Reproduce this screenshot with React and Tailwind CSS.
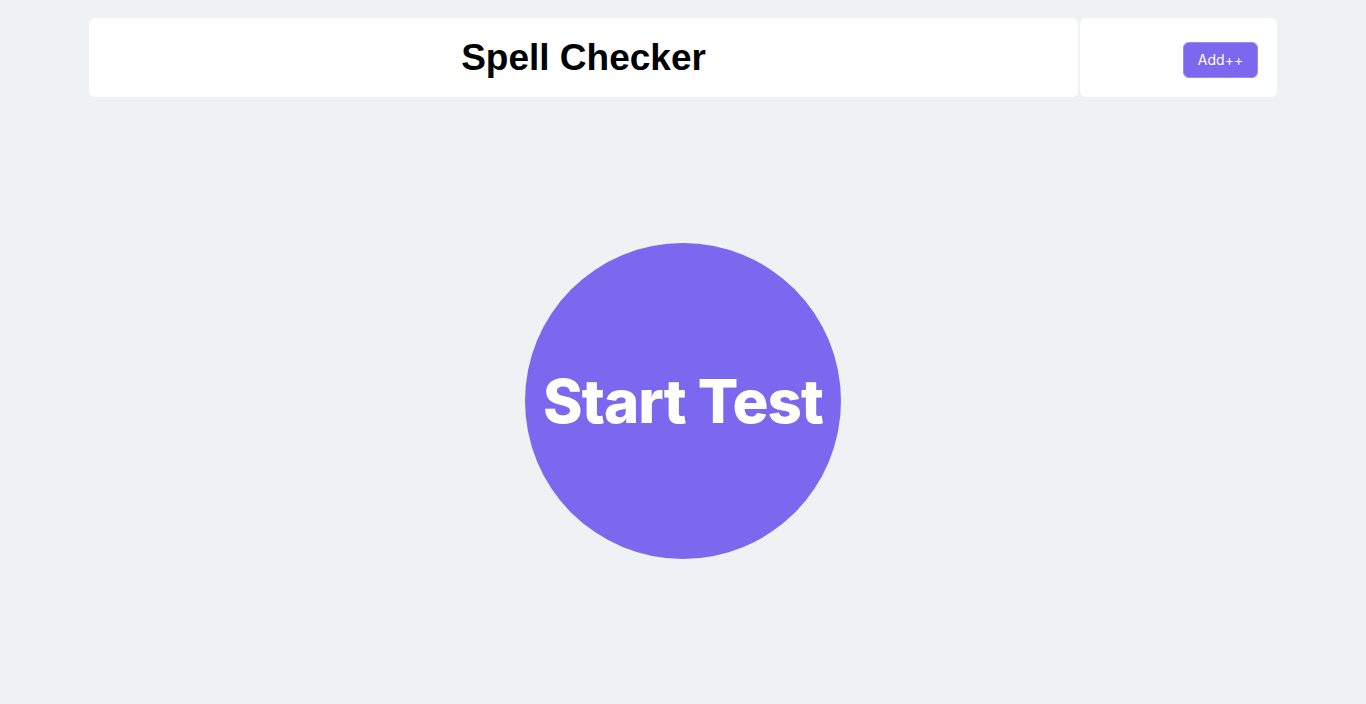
export default function App() {
  return (
    <div className="min-h-screen bg-[#eff2f4] flex flex-col pt-[18px]" style={{ fontFamily: "Inter, sans-serif" }}>
      <header className="w-[1188px] mx-auto flex gap-[2px]">
        <div className="flex-1 h-[79px] bg-white rounded-md flex items-center justify-center">
          <h1 className="text-[37px] font-bold text-black" style={{ fontFamily: '"Liberation Sans", Arial, sans-serif' }}>
            Spell Checker
          </h1>
        </div>
        <div className="w-[197px] h-[79px] bg-white rounded-md flex items-center justify-end pr-[19px] pt-[5px]">
          <button className="h-[36px] w-[75px] rounded-md bg-[#7b68ee] border border-[#9a8cf2] text-white text-sm">
            Add++
          </button>
        </div>
      </header>

      <main className="flex-1 flex items-center justify-center">
        <button className="w-[316px] h-[316px] rounded-full bg-[#7b68ee] text-white text-[60px] font-extrabold tracking-[-1px]">
          Start Test
        </button>
      </main>
    </div>
  );
}
